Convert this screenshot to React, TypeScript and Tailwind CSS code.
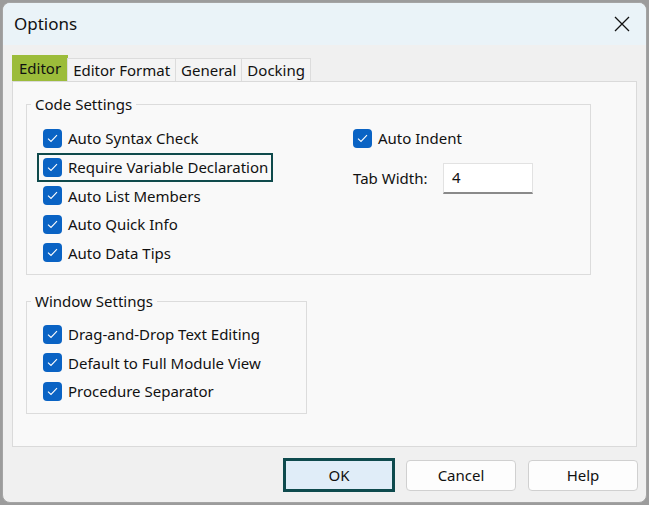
import React from 'react';

const font = { fontFamily: '"Noto Sans", "Open Sans", sans-serif' };

const Check = ({ label, fixed = true }: { label: string; fixed?: boolean }) => (
  <div className={`flex items-center gap-[6px] ${fixed ? 'h-[28.5px]' : ''}`}>
    <span className="w-[19px] h-[19px] rounded-[4px] bg-[#0a63c4] flex items-center justify-center shrink-0">
      <svg width="11" height="9" viewBox="0 0 11 9" fill="none">
        <path d="M1 4.6 L4 7.5 L10 1.2" stroke="white" strokeWidth="1.1" />
      </svg>
    </span>
    <span className="text-[15px] text-[#111]">{label}</span>
  </div>
);

const Tab = ({ label, active }: { label: string; active?: boolean }) =>
  active ? (
    <div className="h-[26px] px-[7px] flex items-center bg-[#9cbc3a] text-[15px] text-[#111]">{label}</div>
  ) : (
    <div className="h-[23px] px-[5px] flex items-center bg-[#f4f4f4] border border-b-0 border-[#dcdcdc] text-[15px] text-[#111] -ml-px first:ml-0">
      {label}
    </div>
  );

const Button = ({ label, primary }: { label: string; primary?: boolean }) =>
  primary ? (
    <button className="w-[112px] h-[34px] border-[3px] border-[#0e4a4d] bg-[#e0edf8] text-[15px] text-[#111]">{label}</button>
  ) : (
    <button className="w-[110px] h-[31px] border border-[#d0d0d0] rounded-[4px] bg-[#fdfdfd] text-[15px] text-[#111]">{label}</button>
  );

export default function App() {
  return (
    <div className="w-[649px] h-[505px] bg-[#9c9c9c] p-[2px]" style={font}>
      <div className="w-full h-full rounded-[8px] border border-[#a4a4a4] overflow-hidden flex flex-col bg-[#f0f0f0]">
        <div className="h-[42px] bg-[#eaf3f8] flex items-center justify-between pl-[11px] pr-[16px] shrink-0">
          <span className="text-[17px] text-[#111]">Options</span>
          <svg width="16" height="16" viewBox="0 0 16 16">
            <path d="M1 1 L15 15 M15 1 L1 15" stroke="#111" strokeWidth="1.3" />
          </svg>
        </div>
        <div className="flex-1 px-[9px] pt-[10px] flex flex-col">
          <div className="flex items-end">
            <Tab label="Editor" active />
            <Tab label="Editor Format" />
            <Tab label="General" />
            <Tab label="Docking" />
          </div>
          <div className="h-[366px] bg-[#f9f9f9] border border-[#dadada] pl-[13px] pt-[12px] flex flex-col gap-[16px]">
            <fieldset className="w-[565px] h-[181px] border border-[#dcdcdc]">
              <legend className="ml-[4px] px-[4px] text-[15px] text-[#111] leading-[20px]">Code Settings</legend>
              <div className="flex pl-[16px] pt-[10px]">
                <div className="w-[310px] flex flex-col">
                  <Check label="Auto Syntax Check" />
                  <div className="w-fit h-[29px] -ml-[6px] pl-[4px] pr-[3px] border-2 border-[#0f4a4c] flex items-center">
                    <Check label="Require Variable Declaration" fixed={false} />
                  </div>
                  <Check label="Auto List Members" />
                  <Check label="Auto Quick Info" />
                  <Check label="Auto Data Tips" />
                </div>
                <div className="flex flex-col">
                  <Check label="Auto Indent" />
                  <div className="flex items-center mt-[10px]">
                    <span className="text-[15px] text-[#111] w-[90px]">Tab Width:</span>
                    <div className="w-[90px] h-[31px] bg-white border border-[#e2e2e2] border-b-2 border-b-[#8a8a8a] px-[8px] flex items-center text-[15px] text-[#111]">
                      4
                    </div>
                  </div>
                </div>
              </div>
            </fieldset>
            <fieldset className="w-[281px] h-[123px] border border-[#dcdcdc]">
              <legend className="ml-[4px] px-[4px] text-[15px] text-[#111] leading-[20px]">Window Settings</legend>
              <div className="pl-[16px] pt-[9px] flex flex-col">
                <Check label="Drag-and-Drop Text Editing" />
                <Check label="Default to Full Module View" />
                <Check label="Procedure Separator" />
              </div>
            </fieldset>
          </div>
          <div className="flex items-center justify-end gap-[11px] mt-[11px] -mr-[1px]">
            <Button label="OK" primary />
            <Button label="Cancel" />
            <div className="ml-px">
              <Button label="Help" />
            </div>
          </div>
        </div>
      </div>
    </div>
  );
}
